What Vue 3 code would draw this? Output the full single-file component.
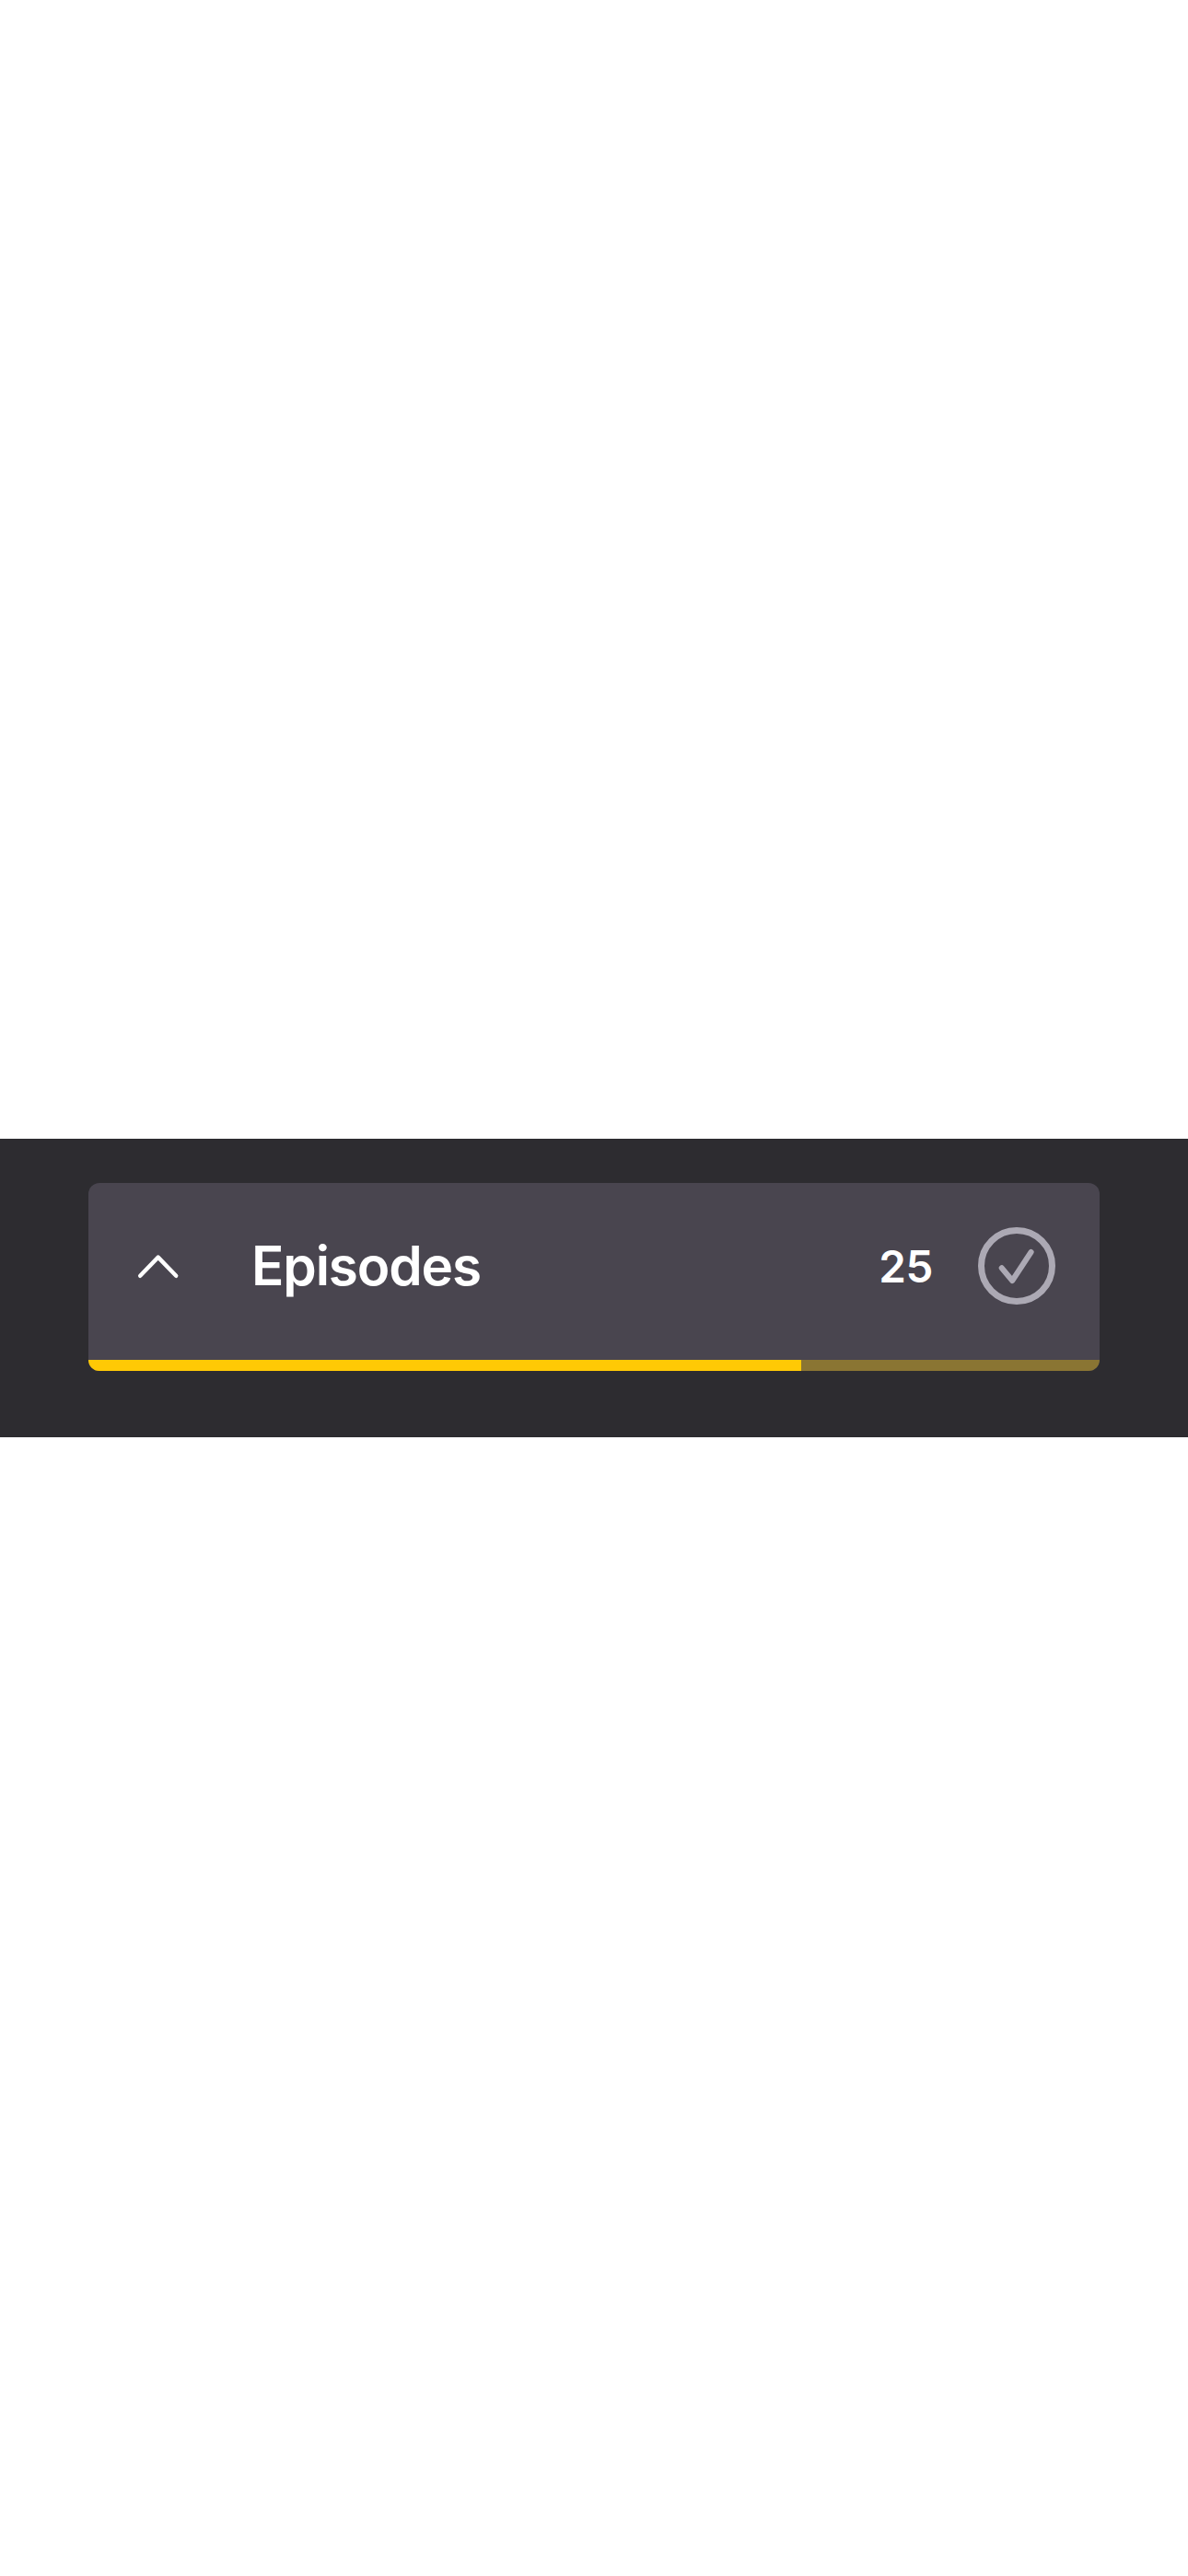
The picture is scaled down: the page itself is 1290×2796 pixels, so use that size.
<script setup>
const title = 'Episodes'
const count = 25
const progress = 70.492
</script>

<template>
  <main class="screen">
    <section class="band">
      <div class="card">
        <div class="row">
          <svg class="chevron" viewBox="0 0 48 48" fill="none">
            <path d="M8.2 34.8 27.7 14.6 47.2 34.8" />
          </svg>
          <h1 class="title">{{ title }}</h1>
          <span class="count">{{ count }}</span>
          <svg class="check" viewBox="0 0 84 84" fill="none">
            <circle cx="42" cy="42" r="38.5" stroke-width="7" />
            <path d="M25.7 44.3 37.2 58 57.6 27" stroke-width="6" />
          </svg>
        </div>
        <div class="track">
          <div class="fill" :style="{ width: progress + '%' }"></div>
        </div>
      </div>
    </section>
  </main>
</template>

<style>
body {
  background: #fff;
}
</style>

<style scoped>
.screen {
  height: 2796px;
  display: flex;
  flex-direction: column;
  justify-content: center;
  font-family: Inter, "Liberation Sans", sans-serif;
}
.band {
  height: 324px;
  box-sizing: border-box;
  padding: 48px 96px 72px;
  background: #2d2c30;
}
.card {
  height: 204px;
  display: flex;
  flex-direction: column;
  border-radius: 12px;
  overflow: hidden;
  background: #49454f;
}
.row {
  height: 192px;
  box-sizing: border-box;
  display: flex;
  align-items: center;
  padding: 0 48px 12px;
  color: #fff;
}
.chevron {
  width: 48px;
  height: 48px;
  overflow: visible;
  stroke: #fff;
  stroke-width: 4.4;
  stroke-linecap: round;
  stroke-linejoin: round;
}
.title {
  margin: 0 auto 0 81px;
  font-size: 58.5px;
  line-height: 72px;
  font-weight: 600;
  letter-spacing: -1.15px;
}
.count {
  margin-right: 49px;
  padding-top: 1px;
  font-size: 47.5px;
  line-height: 60px;
  font-weight: 560;
  letter-spacing: -0.3px;
}
.check {
  width: 84px;
  height: 84px;
  stroke: #aca9b4;
  stroke-linecap: round;
  stroke-linejoin: round;
}
.track {
  height: 12px;
  background: #8a7533;
}
.fill {
  height: 100%;
  background: #ffc905;
}
</style>
